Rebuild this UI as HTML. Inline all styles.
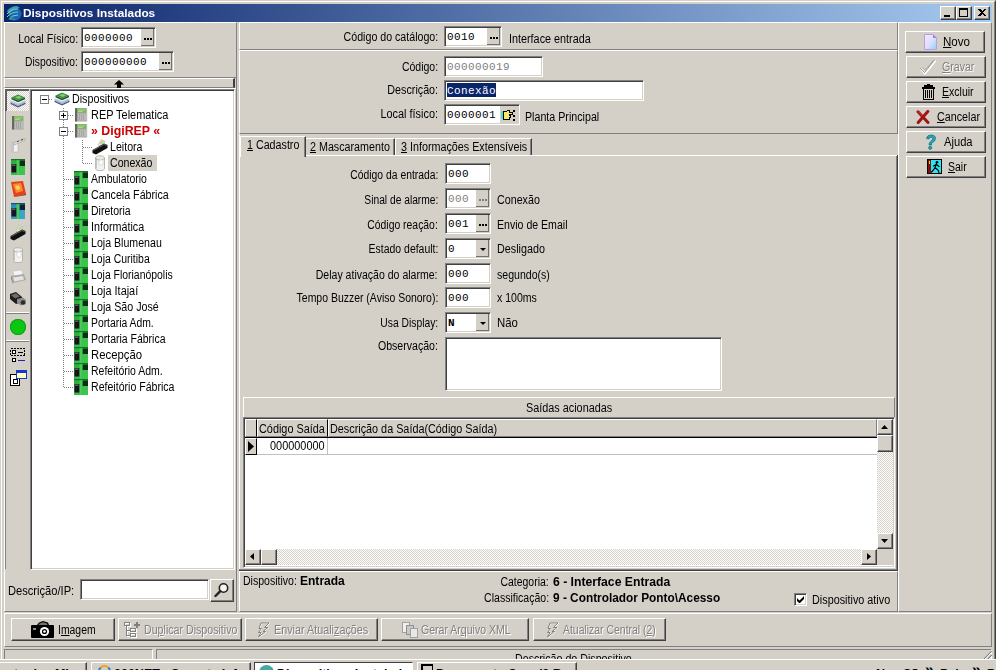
<!DOCTYPE html>
<html lang="pt-BR">
<head>
<meta charset="utf-8">
<title>Dispositivos Instalados</title>
<style>
html,body{margin:0;padding:0;}
body{width:996px;height:670px;overflow:hidden;background:#d4d0c8;position:relative;
 font-family:"Liberation Sans","DejaVu Sans",sans-serif;font-size:12.5px;color:#000;line-height:13px;}
div,span{box-sizing:border-box;}
.a{position:absolute;}
.t{position:absolute;white-space:nowrap;height:13px;line-height:13px;}
.r{text-align:right;}
.b{font-weight:bold;}
u{text-decoration:underline;}
/* raised panel (1px) */
.pr{position:absolute;border:1px solid;border-color:#fff #808080 #808080 #fff;}
/* lowered panel (1px) */
.pl{position:absolute;border:1px solid;border-color:#808080 #fff #fff #808080;}
/* sunken edit (2px) */
.ed{position:absolute;background:#fff;border:1px solid;border-color:#808080 #fff #fff #808080;
 box-shadow:inset 1px 1px 0 #404040, inset -1px -1px 0 #d4d0c8;
 font-family:"Liberation Mono","DejaVu Sans Mono",monospace;font-size:11px;line-height:13px;padding:4px 0 0 2px;white-space:nowrap;overflow:hidden;letter-spacing:0.4px;}
.ed.dis{color:#808080;}
.eb{position:absolute;background:#d4d0c8;border-right:1px solid #707070;border-bottom:1px solid #707070;}
.eb i{position:absolute;top:9px;width:2px;height:2px;background:#000;}
.eb i:nth-child(1){left:3px}.eb i:nth-child(2){left:6px}.eb i:nth-child(3){left:9px}
.eb.g i{background:#808080;}
.sbg{position:absolute;background:#d4d0c8;background-image:linear-gradient(45deg,#fff 25%,transparent 25%,transparent 75%,#fff 75%),linear-gradient(45deg,#fff 25%,transparent 25%,transparent 75%,#fff 75%);background-size:2px 2px;background-position:0 0,1px 1px;}
.cb{position:absolute;width:13px;height:17px;background:#d4d0c8;border-right:1px solid #707070;border-bottom:1px solid #707070;}
.cb:after{content:"";position:absolute;left:3.5px;top:8px;border:3px solid transparent;border-top:3px solid #000;border-bottom:0;}

.dot{position:absolute;background-image:linear-gradient(to right,#808080 50%,transparent 50%);background-size:2px 1px;height:1px;}
.dov{position:absolute;background-image:linear-gradient(to bottom,#808080 50%,transparent 50%);background-size:1px 2px;width:1px;}
.xb{position:absolute;width:9px;height:9px;border:1px solid #808080;background:#fff;}
.xb:before{content:"";position:absolute;left:1px;top:3px;width:5px;height:1px;background:#000;}
.xb.p:after{content:"";position:absolute;left:3px;top:1px;width:1px;height:5px;background:#000;}

/* classic raised button (2px) */
.bt{position:absolute;background:#d4d0c8;border:1px solid;border-color:#fff #404040 #404040 #fff;
 box-shadow:inset -1px -1px 0 #808080, inset 1px 1px 0 #d4d0c8;}
.dis{color:#808080;}
.eb{position:absolute;background:#d4d0c8;border-right:1px solid #707070;border-bottom:1px solid #707070;}
.eb i{position:absolute;top:9px;width:2px;height:2px;background:#000;}
.eb i:nth-child(1){left:3px}.eb i:nth-child(2){left:6px}.eb i:nth-child(3){left:9px}
.eb.g i{background:#808080;}
.sbg{position:absolute;background:#d4d0c8;background-image:linear-gradient(45deg,#fff 25%,transparent 25%,transparent 75%,#fff 75%),linear-gradient(45deg,#fff 25%,transparent 25%,transparent 75%,#fff 75%);background-size:2px 2px;background-position:0 0,1px 1px;}
.cb{position:absolute;width:13px;height:17px;background:#d4d0c8;border-right:1px solid #707070;border-bottom:1px solid #707070;}
.cb:after{content:"";position:absolute;left:3.5px;top:8px;border:3px solid transparent;border-top:3px solid #000;border-bottom:0;}

.dot{position:absolute;background-image:linear-gradient(to right,#808080 50%,transparent 50%);background-size:2px 1px;height:1px;}
.dov{position:absolute;background-image:linear-gradient(to bottom,#808080 50%,transparent 50%);background-size:1px 2px;width:1px;}
.xb{position:absolute;width:9px;height:9px;border:1px solid #808080;background:#fff;}
.xb:before{content:"";position:absolute;left:1px;top:3px;width:5px;height:1px;background:#000;}
.xb.p:after{content:"";position:absolute;left:3px;top:1px;width:1px;height:5px;background:#000;}

.dt{color:#808080;text-shadow:1px 1px 0 #fff;}
</style>
</head>
<body>
<!-- window frame -->
<div class="a" style="left:0;top:0;width:996px;height:661px;border:1px solid;border-color:#d4d0c8 #404040 #404040 #d4d0c8;"></div>
<div class="a" style="left:1px;top:1px;width:994px;height:659px;border:1px solid;border-color:#fff #808080 #808080 #fff;"></div>
<!-- title bar -->
<div class="a" id="title" style="left:4px;top:4px;width:988px;height:18px;background:linear-gradient(to right,#0a246a 0%,#a6caf0 100%);"></div>
<div class="t b" id="ttl" style="transform:scaleX(1.0292);transform-origin:0 50%;margin-left:0px;left:23px;top:5px;color:#fff;font-size:11.5px;line-height:16px;height:16px;">Dispositivos Instalados</div>
<svg class="a" style="left:6px;top:5px" width="16" height="16" viewBox="0 0 16 16"><circle cx="9" cy="9" r="6.5" fill="#1c64b4"/><path d="M1 6 Q5 1 11 1 L14 3 Q7 3 3 9 Z" fill="#3aa0a8"/><path d="M1 9 Q5 4 12 4 M1 12 Q5 7 12 7 M3 14 Q6 10 12 10" stroke="#7cd0d0" stroke-width="1" fill="none"/><path d="M2 14 Q6 16 10 15 L6 12 Z" fill="#2c8c94"/></svg>
<!-- caption buttons -->
<div class="bt" style="left:940px;top:6px;width:16px;height:14px;"></div>
<div class="a" style="left:944px;top:15px;width:6px;height:2px;background:#000;"></div>
<div class="bt" style="left:956px;top:6px;width:16px;height:14px;"></div>
<div class="a" style="left:959px;top:8px;width:9px;height:9px;border:1px solid #000;border-top-width:2px;"></div>
<div class="bt" style="left:974px;top:6px;width:16px;height:14px;"></div>
<svg class="a" style="left:978px;top:9px" width="8" height="7" viewBox="0 0 8 7" shape-rendering="crispEdges"><path d="M0 0 H2 L4 2 L6 0 H8 L5 3.5 L8 7 H6 L4 5 L2 7 H0 L3 3.5 Z" fill="#000"/></svg>
<!-- left top panel -->
<div class="pr" style="left:4px;top:22px;width:233px;height:56px;"></div>
<div class="t r" style="transform:scaleX(0.8550);transform-origin:100% 50%;margin-left:0.6px;right:918px;top:33px;">Local Físico:</div>
<div class="ed" style="left:81px;top:27px;width:75px;height:21px;">0000000</div>
<div class="eb" style="left:141px;top:29px;width:13px;height:17px;"><i></i><i></i><i></i></div>
<div class="t r" style="transform:scaleX(0.8260);transform-origin:100% 50%;margin-left:0.6px;right:918px;top:56px;">Dispositivo:</div>
<div class="ed" style="left:81px;top:51px;width:93px;height:21px;">000000000</div>
<div class="eb" style="left:159px;top:53px;width:13px;height:17px;"><i></i><i></i><i></i></div>
<!-- splitter -->
<div class="pr" style="left:4px;top:78px;width:231px;height:10px;border-color:#fff #404040 #808080 #fff;border-right-width:2px;"></div>
<svg class="a" style="left:114px;top:80px" width="10" height="8" viewBox="0 0 10 8"><path d="M5 0 L10 4.5 H7 V8 H3 V4.5 H0 Z" fill="#000"/></svg>
<div class="a" style="left:236px;top:78px;width:1px;height:493px;background:#808080;"></div>
<!-- icon toolbar -->
<div class="a" style="left:4px;top:88px;width:232px;height:1px;background:#fff;"></div>
<div class="a" style="left:4px;top:88px;width:1px;height:482px;background:#fff;"></div>
<div class="a" style="left:5px;top:89px;width:1px;height:480px;background:#808080;"></div>
<div class="a sbg" style="left:5px;top:89px;width:24px;height:22px;border-top:2px solid #606060;border-left:2px solid #606060;"></div>
<!-- tree -->
<div class="a" style="left:30px;top:89px;width:205px;height:481px;background:#fff;border:1px solid;border-color:#808080 #fff #fff #808080;box-shadow:inset 1px 1px 0 #404040,inset -1px -1px 0 #d4d0c8;"></div>
<div class="dov" style="left:63px;top:108px;height:279px;"></div>
<div class="dov" style="left:82px;top:140px;height:24px;"></div>
<div class="dot" style="left:49px;top:99px;width:4px;"></div>
<svg class="a" style="left:54px;top:91px" width="16" height="16" viewBox="0 0 16 16"><path d="M0.5 9.5 L8 13 L15.5 9.5 V11 L8 14.500 L0.5 11 Z" fill="#4c5a84"/><path d="M0.5 9.5 L8 6.5 L15.5 9.5 L8 13 Z" fill="#8c9cc4"/><path d="M0.5 7 L8 10.5 L15.5 7 V8.800 L8 12.2 L0.5 8.800 Z" fill="#c0c8dc"/><path d="M0.5 7 L8 4 L15.5 7 L8 10.5 Z" fill="#f6f8fc"/><path d="M1.5 4.500 L8 7.500 L15 4.500 V6.200 L8 9.200 L1.5 6.200 Z" fill="#1c5424"/><path d="M1.5 4.500 L8 1.5 L15 4.500 L8 7.500 Z" fill="#3a8c3c"/><path d="M5 4.300 L8.500 2.800 L12 4.300 L8.500 6 Z" fill="#84cc74"/></svg>
<div class="xb " style="left:40px;top:95px;"></div>
<div class="t" style="transform:scaleX(0.8577);transform-origin:0 50%;margin-left:0px;left:72px;top:93px;">Dispositivos</div>
<div class="dot" style="left:64px;top:115px;width:9px;"></div>
<svg class="a" style="left:73px;top:107px" width="16" height="16" viewBox="0 0 16 16"><rect x="2" y="1" width="12" height="13.500" fill="#a4a4a0"/><rect x="2" y="1" width="2" height="13.500" fill="#686866"/><rect x="4" y="1.500" width="9.500" height="4" fill="#78b854"/><path d="M5 3 H12 M5 4.500 H10" stroke="#b8e09c" stroke-width=".8"/><rect x="5" y="6.500" width="8" height="7" fill="#bcbcb8"/><path d="M6.500 7 V13 M8.500 7 V13 M10.500 7 V13" stroke="#9c9c98" stroke-width=".7"/><rect x="13.500" y="1" width=".8" height="13.500" fill="#d4d4d0"/></svg>
<div class="xb p" style="left:59px;top:111px;"></div>
<div class="t" style="transform:scaleX(0.8747);transform-origin:0 50%;margin-left:0px;left:91px;top:109px;">REP Telematica</div>
<div class="dot" style="left:64px;top:131px;width:9px;"></div>
<svg class="a" style="left:73px;top:123px" width="16" height="16" viewBox="0 0 16 16"><rect x="2" y="1" width="12" height="13.500" fill="#a4a4a0"/><rect x="2" y="1" width="2" height="13.500" fill="#686866"/><rect x="4" y="1.500" width="9.500" height="4" fill="#78b854"/><path d="M5 3 H12 M5 4.500 H10" stroke="#b8e09c" stroke-width=".8"/><rect x="5" y="6.500" width="8" height="7" fill="#bcbcb8"/><path d="M6.500 7 V13 M8.500 7 V13 M10.500 7 V13" stroke="#9c9c98" stroke-width=".7"/><rect x="13.500" y="1" width=".8" height="13.500" fill="#d4d4d0"/></svg>
<div class="xb " style="left:59px;top:127px;"></div>
<div class="t b" style="transform:scaleX(0.9895);transform-origin:0 50%;margin-left:0px;left:91px;top:125px;color:#cc0000;">» DigiREP «</div>
<div class="dot" style="left:83px;top:147px;width:9px;"></div>
<svg class="a" style="left:92px;top:139px" width="16" height="16" viewBox="0 0 16 16"><path d="M6 6 L9 0.5 L13 2 L10.500 7.500 Z" fill="#f0f0ec" stroke="#a0a09c" stroke-width=".5"/><path d="M7.500 4.500 L10 1.500 L12 2.500 L10 5.500 Z" fill="#b8d878"/><path d="M0.500 11 L12 4.500 L15.500 6 L15.500 9 L4 15.500 L0.500 14 Z" fill="#101010"/><path d="M1.500 11.300 L12 5.500 L14.500 6.500" stroke="#6c6c6c" stroke-width=".9" fill="none"/></svg>
<div class="t" style="transform:scaleX(0.8500);transform-origin:0 50%;margin-left:0px;left:110px;top:141px;">Leitora</div>
<div class="dot" style="left:83px;top:163px;width:9px;"></div>
<svg class="a" style="left:92px;top:155px" width="16" height="16" viewBox="0 0 16 16"><path d="M3.500 3 Q3.500 0.800 8 0.800 Q12.500 0.800 12.500 3 V13.500 Q12.500 15.600 8 15.600 Q3.500 15.600 3.500 13.500 Z" fill="#f2f2f0" stroke="#a8a8a4" stroke-width=".8"/><path d="M4.300 3 V13.500" stroke="#c4c4c0" stroke-width="1.400"/><rect x="7" y="3" width="4" height="7" rx="1" fill="#fff" stroke="#c8c8c4" stroke-width=".6"/><path d="M3.500 3 Q4 5 8 5 Q12 5 12.500 3" fill="none" stroke="#9c9c98" stroke-width=".6"/></svg>
<div class="a" style="left:108px;top:155px;width:49px;height:16px;background:#d4d0c8;"></div>
<div class="t" style="transform:scaleX(0.8472);transform-origin:0 50%;margin-left:0px;left:110px;top:157px;">Conexão</div>
<div class="dot" style="left:64px;top:179px;width:9px;"></div>
<svg class="a" style="left:73px;top:171px" width="16" height="16" viewBox="0 0 16 16"><rect x="1" y="0" width="14" height="16" fill="#2cb03c"/><rect x="1" y="0" width="14" height="1.200" fill="#187028"/><rect x="6.500" y="1.200" width="3" height="14.800" fill="#48cc58"/><rect x="10" y="7" width="5" height="9" fill="#3cc44c"/><rect x="1" y="13.500" width="6" height="2.500" fill="#38bc48"/><rect x="1.500" y="5" width="4.800" height="8.500" fill="#181420"/><rect x="2" y="5.500" width="3.500" height="1.300" fill="#64746c"/><rect x="9.700" y="1.500" width="5.300" height="5.500" fill="#0c3014"/></svg>
<div class="t" style="transform:scaleX(0.8380);transform-origin:0 50%;margin-left:0px;left:91px;top:173px;">Ambulatorio</div>
<div class="dot" style="left:64px;top:195px;width:9px;"></div>
<svg class="a" style="left:73px;top:187px" width="16" height="16" viewBox="0 0 16 16"><rect x="1" y="0" width="14" height="16" fill="#2cb03c"/><rect x="1" y="0" width="14" height="1.200" fill="#187028"/><rect x="6.500" y="1.200" width="3" height="14.800" fill="#48cc58"/><rect x="10" y="7" width="5" height="9" fill="#3cc44c"/><rect x="1" y="13.500" width="6" height="2.500" fill="#38bc48"/><rect x="1.500" y="5" width="4.800" height="8.500" fill="#181420"/><rect x="2" y="5.500" width="3.500" height="1.300" fill="#64746c"/><rect x="9.700" y="1.500" width="5.300" height="5.500" fill="#0c3014"/></svg>
<div class="t" style="transform:scaleX(0.8537);transform-origin:0 50%;margin-left:0px;left:91px;top:189px;">Cancela Fábrica</div>
<div class="dot" style="left:64px;top:211px;width:9px;"></div>
<svg class="a" style="left:73px;top:203px" width="16" height="16" viewBox="0 0 16 16"><rect x="1" y="0" width="14" height="16" fill="#2cb03c"/><rect x="1" y="0" width="14" height="1.200" fill="#187028"/><rect x="6.500" y="1.200" width="3" height="14.800" fill="#48cc58"/><rect x="10" y="7" width="5" height="9" fill="#3cc44c"/><rect x="1" y="13.500" width="6" height="2.500" fill="#38bc48"/><rect x="1.500" y="5" width="4.800" height="8.500" fill="#181420"/><rect x="2" y="5.500" width="3.500" height="1.300" fill="#64746c"/><rect x="9.700" y="1.500" width="5.300" height="5.500" fill="#0c3014"/></svg>
<div class="t" style="transform:scaleX(0.8402);transform-origin:0 50%;margin-left:0px;left:91px;top:205px;">Diretoria</div>
<div class="dot" style="left:64px;top:227px;width:9px;"></div>
<svg class="a" style="left:73px;top:219px" width="16" height="16" viewBox="0 0 16 16"><rect x="1" y="0" width="14" height="16" fill="#2cb03c"/><rect x="1" y="0" width="14" height="1.200" fill="#187028"/><rect x="6.500" y="1.200" width="3" height="14.800" fill="#48cc58"/><rect x="10" y="7" width="5" height="9" fill="#3cc44c"/><rect x="1" y="13.500" width="6" height="2.500" fill="#38bc48"/><rect x="1.500" y="5" width="4.800" height="8.500" fill="#181420"/><rect x="2" y="5.500" width="3.500" height="1.300" fill="#64746c"/><rect x="9.700" y="1.500" width="5.300" height="5.500" fill="#0c3014"/></svg>
<div class="t" style="transform:scaleX(0.8602);transform-origin:0 50%;margin-left:0px;left:91px;top:221px;">Informática</div>
<div class="dot" style="left:64px;top:243px;width:9px;"></div>
<svg class="a" style="left:73px;top:235px" width="16" height="16" viewBox="0 0 16 16"><rect x="1" y="0" width="14" height="16" fill="#2cb03c"/><rect x="1" y="0" width="14" height="1.200" fill="#187028"/><rect x="6.500" y="1.200" width="3" height="14.800" fill="#48cc58"/><rect x="10" y="7" width="5" height="9" fill="#3cc44c"/><rect x="1" y="13.500" width="6" height="2.500" fill="#38bc48"/><rect x="1.500" y="5" width="4.800" height="8.500" fill="#181420"/><rect x="2" y="5.500" width="3.500" height="1.300" fill="#64746c"/><rect x="9.700" y="1.500" width="5.300" height="5.500" fill="#0c3014"/></svg>
<div class="t" style="transform:scaleX(0.8489);transform-origin:0 50%;margin-left:0px;left:91px;top:237px;">Loja Blumenau</div>
<div class="dot" style="left:64px;top:259px;width:9px;"></div>
<svg class="a" style="left:73px;top:251px" width="16" height="16" viewBox="0 0 16 16"><rect x="1" y="0" width="14" height="16" fill="#2cb03c"/><rect x="1" y="0" width="14" height="1.200" fill="#187028"/><rect x="6.500" y="1.200" width="3" height="14.800" fill="#48cc58"/><rect x="10" y="7" width="5" height="9" fill="#3cc44c"/><rect x="1" y="13.500" width="6" height="2.500" fill="#38bc48"/><rect x="1.500" y="5" width="4.800" height="8.500" fill="#181420"/><rect x="2" y="5.500" width="3.500" height="1.300" fill="#64746c"/><rect x="9.700" y="1.500" width="5.300" height="5.500" fill="#0c3014"/></svg>
<div class="t" style="transform:scaleX(0.8363);transform-origin:0 50%;margin-left:0px;left:91px;top:253px;">Loja Curitiba</div>
<div class="dot" style="left:64px;top:275px;width:9px;"></div>
<svg class="a" style="left:73px;top:267px" width="16" height="16" viewBox="0 0 16 16"><rect x="1" y="0" width="14" height="16" fill="#2cb03c"/><rect x="1" y="0" width="14" height="1.200" fill="#187028"/><rect x="6.500" y="1.200" width="3" height="14.800" fill="#48cc58"/><rect x="10" y="7" width="5" height="9" fill="#3cc44c"/><rect x="1" y="13.500" width="6" height="2.500" fill="#38bc48"/><rect x="1.500" y="5" width="4.800" height="8.500" fill="#181420"/><rect x="2" y="5.500" width="3.500" height="1.300" fill="#64746c"/><rect x="9.700" y="1.500" width="5.300" height="5.500" fill="#0c3014"/></svg>
<div class="t" style="transform:scaleX(0.8338);transform-origin:0 50%;margin-left:0px;left:91px;top:269px;">Loja Florianópolis</div>
<div class="dot" style="left:64px;top:291px;width:9px;"></div>
<svg class="a" style="left:73px;top:283px" width="16" height="16" viewBox="0 0 16 16"><rect x="1" y="0" width="14" height="16" fill="#2cb03c"/><rect x="1" y="0" width="14" height="1.200" fill="#187028"/><rect x="6.500" y="1.200" width="3" height="14.800" fill="#48cc58"/><rect x="10" y="7" width="5" height="9" fill="#3cc44c"/><rect x="1" y="13.500" width="6" height="2.500" fill="#38bc48"/><rect x="1.500" y="5" width="4.800" height="8.500" fill="#181420"/><rect x="2" y="5.500" width="3.500" height="1.300" fill="#64746c"/><rect x="9.700" y="1.500" width="5.300" height="5.500" fill="#0c3014"/></svg>
<div class="t" style="transform:scaleX(0.8705);transform-origin:0 50%;margin-left:0px;left:91px;top:285px;">Loja Itajaí</div>
<div class="dot" style="left:64px;top:307px;width:9px;"></div>
<svg class="a" style="left:73px;top:299px" width="16" height="16" viewBox="0 0 16 16"><rect x="1" y="0" width="14" height="16" fill="#2cb03c"/><rect x="1" y="0" width="14" height="1.200" fill="#187028"/><rect x="6.500" y="1.200" width="3" height="14.800" fill="#48cc58"/><rect x="10" y="7" width="5" height="9" fill="#3cc44c"/><rect x="1" y="13.500" width="6" height="2.500" fill="#38bc48"/><rect x="1.500" y="5" width="4.800" height="8.500" fill="#181420"/><rect x="2" y="5.500" width="3.500" height="1.300" fill="#64746c"/><rect x="9.700" y="1.500" width="5.300" height="5.500" fill="#0c3014"/></svg>
<div class="t" style="transform:scaleX(0.8544);transform-origin:0 50%;margin-left:0px;left:91px;top:301px;">Loja São José</div>
<div class="dot" style="left:64px;top:323px;width:9px;"></div>
<svg class="a" style="left:73px;top:315px" width="16" height="16" viewBox="0 0 16 16"><rect x="1" y="0" width="14" height="16" fill="#2cb03c"/><rect x="1" y="0" width="14" height="1.200" fill="#187028"/><rect x="6.500" y="1.200" width="3" height="14.800" fill="#48cc58"/><rect x="10" y="7" width="5" height="9" fill="#3cc44c"/><rect x="1" y="13.500" width="6" height="2.500" fill="#38bc48"/><rect x="1.500" y="5" width="4.800" height="8.500" fill="#181420"/><rect x="2" y="5.500" width="3.500" height="1.300" fill="#64746c"/><rect x="9.700" y="1.500" width="5.300" height="5.500" fill="#0c3014"/></svg>
<div class="t" style="transform:scaleX(0.8279);transform-origin:0 50%;margin-left:0px;left:91px;top:317px;">Portaria Adm.</div>
<div class="dot" style="left:64px;top:339px;width:9px;"></div>
<svg class="a" style="left:73px;top:331px" width="16" height="16" viewBox="0 0 16 16"><rect x="1" y="0" width="14" height="16" fill="#2cb03c"/><rect x="1" y="0" width="14" height="1.200" fill="#187028"/><rect x="6.500" y="1.200" width="3" height="14.800" fill="#48cc58"/><rect x="10" y="7" width="5" height="9" fill="#3cc44c"/><rect x="1" y="13.500" width="6" height="2.500" fill="#38bc48"/><rect x="1.500" y="5" width="4.800" height="8.500" fill="#181420"/><rect x="2" y="5.500" width="3.500" height="1.300" fill="#64746c"/><rect x="9.700" y="1.500" width="5.300" height="5.500" fill="#0c3014"/></svg>
<div class="t" style="transform:scaleX(0.8377);transform-origin:0 50%;margin-left:0px;left:91px;top:333px;">Portaria Fábrica</div>
<div class="dot" style="left:64px;top:355px;width:9px;"></div>
<svg class="a" style="left:73px;top:347px" width="16" height="16" viewBox="0 0 16 16"><rect x="1" y="0" width="14" height="16" fill="#2cb03c"/><rect x="1" y="0" width="14" height="1.200" fill="#187028"/><rect x="6.500" y="1.200" width="3" height="14.800" fill="#48cc58"/><rect x="10" y="7" width="5" height="9" fill="#3cc44c"/><rect x="1" y="13.500" width="6" height="2.500" fill="#38bc48"/><rect x="1.500" y="5" width="4.800" height="8.500" fill="#181420"/><rect x="2" y="5.500" width="3.500" height="1.300" fill="#64746c"/><rect x="9.700" y="1.500" width="5.300" height="5.500" fill="#0c3014"/></svg>
<div class="t" style="transform:scaleX(0.9059);transform-origin:0 50%;margin-left:0px;left:91px;top:349px;">Recepção</div>
<div class="dot" style="left:64px;top:371px;width:9px;"></div>
<svg class="a" style="left:73px;top:363px" width="16" height="16" viewBox="0 0 16 16"><rect x="1" y="0" width="14" height="16" fill="#2cb03c"/><rect x="1" y="0" width="14" height="1.200" fill="#187028"/><rect x="6.500" y="1.200" width="3" height="14.800" fill="#48cc58"/><rect x="10" y="7" width="5" height="9" fill="#3cc44c"/><rect x="1" y="13.500" width="6" height="2.500" fill="#38bc48"/><rect x="1.500" y="5" width="4.800" height="8.500" fill="#181420"/><rect x="2" y="5.500" width="3.500" height="1.300" fill="#64746c"/><rect x="9.700" y="1.500" width="5.300" height="5.500" fill="#0c3014"/></svg>
<div class="t" style="transform:scaleX(0.8389);transform-origin:0 50%;margin-left:0px;left:91px;top:365px;">Refeitório Adm.</div>
<div class="dot" style="left:64px;top:387px;width:9px;"></div>
<svg class="a" style="left:73px;top:379px" width="16" height="16" viewBox="0 0 16 16"><rect x="1" y="0" width="14" height="16" fill="#2cb03c"/><rect x="1" y="0" width="14" height="1.200" fill="#187028"/><rect x="6.500" y="1.200" width="3" height="14.800" fill="#48cc58"/><rect x="10" y="7" width="5" height="9" fill="#3cc44c"/><rect x="1" y="13.500" width="6" height="2.500" fill="#38bc48"/><rect x="1.500" y="5" width="4.800" height="8.500" fill="#181420"/><rect x="2" y="5.500" width="3.500" height="1.300" fill="#64746c"/><rect x="9.700" y="1.500" width="5.300" height="5.500" fill="#0c3014"/></svg>
<div class="t" style="transform:scaleX(0.8464);transform-origin:0 50%;margin-left:0px;left:91px;top:381px;">Refeitório Fábrica</div>

<svg class="a" style="left:10px;top:93px" width="16" height="16" viewBox="0 0 16 16"><path d="M0.5 9.5 L8 13 L15.5 9.5 V11 L8 14.500 L0.5 11 Z" fill="#4c5a84"/><path d="M0.5 9.5 L8 6.5 L15.5 9.5 L8 13 Z" fill="#8c9cc4"/><path d="M0.5 7 L8 10.5 L15.5 7 V8.800 L8 12.2 L0.5 8.800 Z" fill="#c0c8dc"/><path d="M0.5 7 L8 4 L15.5 7 L8 10.5 Z" fill="#f6f8fc"/><path d="M1.5 4.500 L8 7.500 L15 4.500 V6.200 L8 9.200 L1.5 6.200 Z" fill="#1c5424"/><path d="M1.5 4.500 L8 1.5 L15 4.500 L8 7.500 Z" fill="#3a8c3c"/><path d="M5 4.300 L8.500 2.800 L12 4.300 L8.500 6 Z" fill="#84cc74"/></svg>
<svg class="a" style="left:10px;top:115px" width="16" height="16" viewBox="0 0 16 16"><rect x="2" y="1" width="12" height="13.500" fill="#a4a4a0"/><rect x="2" y="1" width="2" height="13.500" fill="#686866"/><rect x="4" y="1.500" width="9.500" height="4" fill="#78b854"/><path d="M5 3 H12 M5 4.500 H10" stroke="#b8e09c" stroke-width=".8"/><rect x="5" y="6.500" width="8" height="7" fill="#bcbcb8"/><path d="M6.500 7 V13 M8.500 7 V13 M10.500 7 V13" stroke="#9c9c98" stroke-width=".7"/><rect x="13.500" y="1" width=".8" height="13.500" fill="#d4d4d0"/></svg>
<svg class="a" style="left:10px;top:137px" width="16" height="16" viewBox="0 0 16 16"><rect x="2" y="5" width="6" height="10" fill="#f2f2f2" stroke="#b0b0b0" stroke-width=".6"/><rect x="2" y="5" width="2" height="10" fill="#c4c8d0"/><path d="M4 6 L15 1.5 L15 3.5 L4 8 Z" fill="#e8e8e8" stroke="#8c8c8c" stroke-width=".5"/><path d="M7 4.8 L9 4 M11 3.2 L13 2.4" stroke="#555" stroke-width="1.2"/></svg>
<svg class="a" style="left:10px;top:159px" width="16" height="16" viewBox="0 0 16 16"><rect x="1" y="0" width="14" height="16" fill="#2cb03c"/><rect x="1" y="0" width="14" height="1.200" fill="#187028"/><rect x="6.500" y="1.200" width="3" height="14.800" fill="#48cc58"/><rect x="10" y="7" width="5" height="9" fill="#3cc44c"/><rect x="1" y="13.500" width="6" height="2.500" fill="#38bc48"/><rect x="1.500" y="5" width="4.800" height="8.500" fill="#181420"/><rect x="2" y="5.500" width="3.500" height="1.300" fill="#64746c"/><rect x="9.700" y="1.500" width="5.300" height="5.500" fill="#0c3014"/></svg>
<svg class="a" style="left:10px;top:181px" width="16" height="16" viewBox="0 0 16 16"><path d="M1 1 L13 0 L16 13 L4 16 Z" fill="#e8401c"/><path d="M3 3 L11 2 L13 10 L6 12 Z" fill="#f89030"/><path d="M5 5 L9 4.5 L10 8 L7 9 Z" fill="#ffd060"/><path d="M4 16 L16 13 L16 14 L4.5 16 Z" fill="#7a1c08"/></svg>
<svg class="a" style="left:10px;top:203px" width="16" height="16" viewBox="0 0 16 16"><rect x="1" y="0" width="14" height="16" fill="#2a90b4"/><rect x="1" y="0" width="14" height="1.200" fill="#14506c"/><rect x="6.500" y="1.200" width="3" height="14.800" fill="#48cc58"/><rect x="10" y="7" width="5" height="9" fill="#3ca4c8"/><rect x="1" y="13.500" width="6" height="2.500" fill="#389cc0"/><rect x="1.500" y="5" width="4.800" height="8.500" fill="#181420"/><rect x="2" y="5.500" width="3.500" height="1.300" fill="#64746c"/><rect x="9.700" y="1.500" width="5.300" height="5.500" fill="#0c2030"/></svg>
<svg class="a" style="left:10px;top:225px" width="16" height="16" viewBox="0 0 16 16"><path d="M6 6 L9 0.5 L13 2 L10.500 7.500 Z" fill="#f0f0ec" stroke="#a0a09c" stroke-width=".5"/><path d="M7.500 4.500 L10 1.500 L12 2.500 L10 5.500 Z" fill="#b8d878"/><path d="M0.500 11 L12 4.500 L15.500 6 L15.500 9 L4 15.500 L0.500 14 Z" fill="#101010"/><path d="M1.500 11.300 L12 5.500 L14.500 6.500" stroke="#6c6c6c" stroke-width=".9" fill="none"/></svg>
<svg class="a" style="left:10px;top:247px" width="16" height="16" viewBox="0 0 16 16"><path d="M3.500 3 Q3.500 0.800 8 0.800 Q12.500 0.800 12.500 3 V13.500 Q12.500 15.600 8 15.600 Q3.500 15.600 3.500 13.500 Z" fill="#f2f2f0" stroke="#a8a8a4" stroke-width=".8"/><path d="M4.300 3 V13.500" stroke="#c4c4c0" stroke-width="1.400"/><rect x="7" y="3" width="4" height="7" rx="1" fill="#fff" stroke="#c8c8c4" stroke-width=".6"/><path d="M3.500 3 Q4 5 8 5 Q12 5 12.500 3" fill="none" stroke="#9c9c98" stroke-width=".6"/></svg>
<svg class="a" style="left:10px;top:269px" width="16" height="16" viewBox="0 0 16 16"><path d="M3 2 L12 1 L13 6 L4 7 Z" fill="#f4f4f4" stroke="#b8b8b8" stroke-width=".5"/><path d="M1 7 L14 5 L16 11 L3 14 Z" fill="#a8a8a8"/><path d="M3 8.5 L13 7 L14 10.5 L4.5 12.5 Z" fill="#e4e4e4"/><path d="M1 7 L3 14 L3 15 L1 9 Z" fill="#5c5c5c"/></svg>
<svg class="a" style="left:10px;top:291px" width="16" height="16" viewBox="0 0 16 16"><path d="M0 3 L6 1 L12 6 L12 11 L6 13 L0 8 Z" fill="#1c1c1c"/><path d="M1 4 L6 2.2 L10 5.5 L5 7.5 Z" fill="#6c6c6c"/><path d="M7 8 L13 6.5 L16 9 L16 13 L11 14.5 L7 12 Z" fill="#8c8c8c"/><circle cx="13" cy="11.5" r="2.3" fill="#2c2c2c"/></svg>
<div class="a" style="left:6px;top:312px;width:23px;height:2px;border-top:1px solid #fff;border-bottom:1px solid #808080;"></div>
<div class="a" style="left:10px;top:319px;width:16px;height:16px;border-radius:8px;background:#08c812;box-shadow:inset 0 0 0 1px #10a018;"></div>
<div class="a" style="left:6px;top:340px;width:23px;height:2px;border-top:1px solid #fff;border-bottom:1px solid #808080;"></div>
<svg class="a" style="left:10px;top:348px" width="16" height="16" viewBox="0 0 16 16" shape-rendering="crispEdges"><rect x=".5" y=".5" width="14" height="7" fill="none" stroke="#000" stroke-dasharray="2 1"/><rect x="2.5" y="2.5" width="3" height="3" fill="#fff" stroke="#000"/><path d="M8 4.5 H13" stroke="#000"/><rect x="2.5" y="10.5" width="3" height="3" fill="#fff" stroke="#000"/><path d="M8 12.5 H15" stroke="#2020c0"/></svg>
<svg class="a" style="left:10px;top:370px" width="17" height="16" viewBox="0 0 17 16" shape-rendering="crispEdges"><rect x=".5" y="4.5" width="9" height="11" fill="#fff" stroke="#000"/><rect x="3.5" y="9.5" width="4" height="4" fill="#fff" stroke="#000"/><rect x="6.5" y=".5" width="10" height="8" fill="#ffffc0" stroke="#1838c8"/><rect x="7" y="1" width="9" height="2" fill="#1838c8"/></svg>

<!-- search row -->
<div class="t" style="transform:scaleX(0.8905);transform-origin:0 50%;margin-left:0px;left:8px;top:585px;">Descrição/IP:</div>
<div class="ed" style="left:80px;top:579px;width:129px;height:21px;"></div>
<div class="bt" style="left:210px;top:579px;width:24px;height:23px;"></div>
<svg class="a" style="left:214px;top:582px" width="16" height="16" viewBox="0 0 16 16"><circle cx="9.5" cy="6" r="4.2" fill="#f4f4f0" stroke="#222" stroke-width="1.6"/><path d="M6.3 9.2 L1.5 14" stroke="#222" stroke-width="2.4" stroke-linecap="round"/></svg>

<!-- right: catalog panel -->
<div class="pr" style="left:239px;top:22px;width:659px;height:28px;"></div>
<div class="t r" style="transform:scaleX(0.8507);transform-origin:100% 50%;margin-left:0.6px;right:558px;top:31px;">Código do catálogo:</div>
<div class="ed" style="left:444px;top:26px;width:58px;height:21px;">0010</div>
<div class="eb" style="left:487px;top:28px;width:13px;height:17px;"><i></i><i></i><i></i></div>
<div class="t" style="transform:scaleX(0.8644);transform-origin:0 50%;margin-left:0px;left:509px;top:33px;">Interface entrada</div>
<!-- right: main fields panel -->
<div class="pr" style="left:239px;top:50px;width:659px;height:84px;"></div>
<div class="t r" style="transform:scaleX(0.8400);transform-origin:100% 50%;margin-left:0.6px;right:558px;top:61px;">Código:</div>
<div class="ed dis" style="left:444px;top:56px;width:99px;height:21px;">000000019</div>
<div class="t r" style="transform:scaleX(0.8586);transform-origin:100% 50%;margin-left:0.6px;right:558px;top:84px;">Descrição:</div>
<div class="ed" style="left:444px;top:80px;width:200px;height:21px;"></div>
<div class="a" style="left:447px;top:83px;width:49px;height:14px;background:#0a246a;"></div>
<div class="ed" style="left:444px;top:80px;width:199px;height:21px;background:none;border-color:transparent;box-shadow:none;color:#fff;">Conexão</div>
<div class="t r" style="transform:scaleX(0.8725);transform-origin:100% 50%;margin-left:0.6px;right:558px;top:108px;">Local físico:</div>
<div class="ed" style="left:444px;top:104px;width:76px;height:21px;">0000001</div>
<div class="eb" style="left:500px;top:106px;width:18px;height:17px;border:0;"></div>
<svg class="a" style="left:501px;top:110px" width="15" height="11" viewBox="0 0 15 11" shape-rendering="crispEdges"><rect x="0" y="1" width="2" height="8" fill="#40e0d0"/><path d="M2.500 1.500 H5.500 L6.500 0.500 H8.500 V2.500 H11.500 V4.500 H8.500 V5.500 H9.500 V7.500 H8.500 V9.500 H2.500 Z" fill="#f8e868" stroke="#000" stroke-width="1"/><rect x="12" y="0" width="2" height="2" fill="#000"/><rect x="12" y="5" width="2" height="2" fill="#000"/><rect x="12" y="9" width="2" height="2" fill="#000"/></svg>
<div class="t" style="transform:scaleX(0.8543);transform-origin:0 50%;margin-left:0px;left:525px;top:111px;">Planta Principal</div>
<!-- tabs area -->
<div class="a" style="left:239px;top:134px;width:1px;height:436px;background:#fff;"></div>
<div class="a" style="left:239px;top:155px;width:659px;height:416px;border-right:1px solid #404040;border-bottom:1px solid #404040;box-shadow:inset -1px -1px 0 #808080;"></div>
<!-- page body border -->
<div class="a" style="left:240px;top:155px;width:657px;height:1px;background:#fff;"></div>
<!-- tab 2 -->
<div class="a" style="left:306px;top:138px;width:89px;height:17px;border-top:1px solid #fff;border-right:1px solid #404040;box-shadow:inset -1px 0 0 #808080;"></div>
<div class="t" style="transform:scaleX(0.8581);transform-origin:0 50%;margin-left:0px;left:310px;top:141px;"><u>2</u> Mascaramento</div>
<!-- tab 3 -->
<div class="a" style="left:395px;top:138px;width:137px;height:17px;border-top:1px solid #fff;border-left:1px solid #fff;border-right:1px solid #404040;box-shadow:inset -1px 0 0 #808080;"></div>
<div class="t" style="transform:scaleX(0.8608);transform-origin:0 50%;margin-left:0px;left:401px;top:141px;"><u>3</u> Informações Extensíveis</div>
<!-- tab 1 selected -->
<div class="a" style="left:240px;top:136px;width:66px;height:21px;background:#d4d0c8;border-top:1px solid #fff;border-left:1px solid #fff;border-right:1px solid #404040;box-shadow:inset -1px 0 0 #808080;"></div>
<div class="t" style="transform:scaleX(0.8568);transform-origin:0 50%;margin-left:0px;left:247px;top:139px;"><u>1</u> Cadastro</div>
<!-- fields -->
<div class="t r" style="transform:scaleX(0.8275);transform-origin:100% 50%;margin-left:0.6px;right:558px;top:169px;">Código da entrada:</div>
<div class="ed" style="left:445px;top:163px;width:46px;height:21px;">000</div>
<div class="t r" style="transform:scaleX(0.8192);transform-origin:100% 50%;margin-left:0.6px;right:558px;top:194px;">Sinal de alarme:</div>
<div class="ed dis" style="left:445px;top:188px;width:46px;height:21px;">000</div>
<div class="eb g" style="left:476px;top:190px;width:13px;height:17px;"><i></i><i></i><i></i></div>
<div class="t" style="transform:scaleX(0.8572);transform-origin:0 50%;margin-left:0px;left:497px;top:194px;">Conexão</div>
<div class="t r" style="transform:scaleX(0.8316);transform-origin:100% 50%;margin-left:0.6px;right:558px;top:219px;">Código reação:</div>
<div class="ed" style="left:445px;top:213px;width:46px;height:21px;">001</div>
<div class="eb" style="left:476px;top:215px;width:13px;height:17px;"><i></i><i></i><i></i></div>
<div class="t" style="transform:scaleX(0.8456);transform-origin:0 50%;margin-left:0px;left:497px;top:219px;">Envio de Email</div>
<div class="t r" style="transform:scaleX(0.8369);transform-origin:100% 50%;margin-left:0.6px;right:558px;top:243px;">Estado default:</div>
<div class="ed" style="left:445px;top:238px;width:46px;height:21px;">0</div>
<div class="cb" style="left:476px;top:240px;"></div>
<div class="t" style="transform:scaleX(0.8616);transform-origin:0 50%;margin-left:0px;left:497px;top:243px;">Desligado</div>
<div class="t r" style="transform:scaleX(0.8427);transform-origin:100% 50%;margin-left:0.6px;right:558px;top:269px;">Delay ativação do alarme:</div>
<div class="ed" style="left:445px;top:263px;width:46px;height:21px;">000</div>
<div class="t" style="transform:scaleX(0.8458);transform-origin:0 50%;margin-left:0px;left:497px;top:269px;">segundo(s)</div>
<div class="t r" style="transform:scaleX(0.8370);transform-origin:100% 50%;margin-left:0.6px;right:558px;top:292px;">Tempo Buzzer (Aviso Sonoro):</div>
<div class="ed" style="left:445px;top:287px;width:46px;height:21px;">000</div>
<div class="t" style="transform:scaleX(0.8444);transform-origin:0 50%;margin-left:0px;left:497px;top:292px;">x 100ms</div>
<div class="t r" style="transform:scaleX(0.8237);transform-origin:100% 50%;margin-left:0.6px;right:558px;top:317px;">Usa Display:</div>
<div class="ed b" style="left:445px;top:312px;width:46px;height:21px;">N</div>
<div class="cb" style="left:476px;top:314px;"></div>
<div class="t" style="transform:scaleX(0.9112);transform-origin:0 50%;margin-left:0px;left:497px;top:317px;">Não</div>
<div class="t r" style="transform:scaleX(0.8451);transform-origin:100% 50%;margin-left:0.6px;right:558px;top:340px;">Observação:</div>
<div class="ed" style="left:445px;top:337px;width:277px;height:54px;"></div>

<!-- Saídas acionadas header -->
<div class="pr" style="left:243px;top:397px;width:652px;height:21px;"></div>
<div class="t" style="transform:scaleX(0.8673);transform-origin:0 50%;margin-left:0px;left:526px;top:402px;">Saídas acionadas</div>
<!-- grid -->
<div class="a" style="left:243px;top:417px;width:652px;height:151px;background:#fff;border:1px solid;border-color:#808080 #fff #fff #808080;box-shadow:inset 1px 1px 0 #404040,inset -1px -1px 0 #d4d0c8;"></div>
<!-- header cells -->
<div class="a" style="left:245px;top:419px;width:632px;height:19px;background:#d4d0c8;border-bottom:1px solid #000;"></div>
<div class="a" style="left:245px;top:419px;width:12px;height:18px;background:#d4d0c8;border:1px solid;border-color:#fff #808080 #808080 #fff;border-right-color:#000;"></div>
<div class="a" style="left:257px;top:419px;width:71px;height:18px;background:#d4d0c8;border:1px solid;border-color:#fff #000 #808080 #fff;"></div>
<div class="a" style="left:328px;top:419px;width:549px;height:18px;background:#d4d0c8;border:1px solid;border-color:#fff #808080 #808080 #fff;"></div>
<div class="t" style="transform:scaleX(0.8698);transform-origin:0 50%;margin-left:0px;left:259px;top:423px;">Código Saída</div>
<div class="t" style="transform:scaleX(0.8656);transform-origin:0 50%;margin-left:0px;left:330px;top:423px;">Descrição da Saída(Código Saída)</div>
<!-- row -->
<div class="a" style="left:245px;top:438px;width:12px;height:17px;background:#d4d0c8;border:1px solid;border-color:#fff #000 #000 #fff;"></div>
<svg class="a" style="left:248px;top:441px" width="6" height="11" viewBox="0 0 6 11"><path d="M0 0 L6 5.5 L0 11 Z" fill="#000"/></svg>
<div class="a" style="left:257px;top:454px;width:620px;height:1px;background:#c0c0c0;"></div>
<div class="a" style="left:327px;top:438px;width:1px;height:17px;background:#c0c0c0;"></div>
<div class="t" style="transform:scaleX(0.8725);transform-origin:0 50%;margin-left:0px;left:270px;top:440px;">000000000</div>
<!-- v scrollbar -->
<div class="sbg" style="left:877px;top:419px;width:16px;height:130px;"></div>
<div class="bt" style="left:877px;top:419px;width:16px;height:16px;"></div>
<svg class="a" style="left:881px;top:425px" width="7" height="4" viewBox="0 0 7 4"><path d="M0 4 L3.5 0 L7 4 Z" fill="#000"/></svg>
<div class="bt" style="left:877px;top:435px;width:16px;height:17px;"></div>
<div class="bt" style="left:877px;top:533px;width:16px;height:16px;"></div>
<svg class="a" style="left:881px;top:539px" width="7" height="4" viewBox="0 0 7 4"><path d="M0 0 L3.5 4 L7 0 Z" fill="#000"/></svg>
<!-- h scrollbar -->
<div class="sbg" style="left:245px;top:549px;width:632px;height:16px;"></div>
<div class="bt" style="left:245px;top:549px;width:16px;height:16px;"></div>
<svg class="a" style="left:250px;top:553px" width="4" height="7" viewBox="0 0 4 7"><path d="M4 0 L0 3.5 L4 7 Z" fill="#000"/></svg>
<div class="bt" style="left:261px;top:549px;width:16px;height:16px;"></div>
<div class="bt" style="left:861px;top:549px;width:16px;height:16px;"></div>
<svg class="a" style="left:867px;top:553px" width="4" height="7" viewBox="0 0 4 7"><path d="M0 0 L4 3.5 L0 7 Z" fill="#000"/></svg>
<div class="a" style="left:877px;top:549px;width:16px;height:16px;background:#d4d0c8;"></div>


<!-- right button column -->
<div class="pr" style="left:898px;top:22px;width:94px;height:590px;border-right-color:#808080;"></div>
<div class="bt" style="left:905px;top:31px;width:80px;height:22px;"></div>
<svg class="a" style="left:924px;top:34px" width="13" height="16" viewBox="0 0 13 16"><defs><linearGradient id="gn" x1="0" y1="0" x2="1" y2="1"><stop offset="0" stop-color="#f4e8ff"/><stop offset=".5" stop-color="#e0e0ff"/><stop offset="1" stop-color="#90d0f4"/></linearGradient></defs><path d="M.5 .5 H9 L12.5 4 V15.5 H.5 Z" fill="url(#gn)" stroke="#b8a0e0" stroke-width="1"/><path d="M9 .5 V4 H12.5 Z" fill="#a080d8"/></svg>
<div class="t" style="transform:scaleX(0.9251);transform-origin:0 50%;margin-left:0px;left:942.5px;top:36px;"><u>N</u>ovo</div>
<div class="bt" style="left:906px;top:56px;width:80px;height:22px;"></div>
<svg class="a" style="left:919px;top:59px" width="18" height="16" viewBox="0 0 18 16"><path d="M2 10 L6 14.5 L16.5 1.5" stroke="#fff" stroke-width="2.2" fill="none"/><path d="M1.3 9.3 L5.5 13.6 L15.5 1" stroke="#909090" stroke-width="1" fill="none"/><path d="M3 8 L6 11 L15 .5" stroke="#a8a8a8" stroke-width=".8" fill="none"/></svg>
<div class="t dt" style="transform:scaleX(0.8478);transform-origin:0 50%;margin-left:0px;left:942px;top:61px;"><u>G</u>ravar</div>
<div class="bt" style="left:906px;top:81px;width:80px;height:22px;"></div>
<svg class="a" style="left:922px;top:84px" width="13" height="16" viewBox="0 0 13 16" shape-rendering="crispEdges"><path d="M5 0 H8 V1 H5 Z M2 1 H11 V3 H2 Z M0 3 H13 V5 H0 Z" fill="#000"/><path d="M1.5 5 V15.5 H11.5 V5" fill="#d4d0c8" stroke="#000" stroke-width="1"/><path d="M3.5 6 V14 M5.5 6 V14 M7.5 6 V14 M9.5 6 V14" stroke="#000" stroke-width="1"/></svg>
<div class="t" style="transform:scaleX(0.8423);transform-origin:0 50%;margin-left:0px;left:942px;top:86px;"><u>E</u>xcluir</div>
<div class="bt" style="left:906px;top:106px;width:80px;height:22px;"></div>
<svg class="a" style="left:916px;top:110px" width="14" height="14" viewBox="0 0 14 14"><path d="M2 1.800 L12 12.500 M11.800 1.500 L2.200 12.500" stroke="#a01414" stroke-width="3" stroke-linecap="round" fill="none"/><path d="M2.200 1.600 L6.500 6.200" stroke="#d04848" stroke-width=".9" fill="none"/></svg>
<div class="t" style="transform:scaleX(0.8595);transform-origin:0 50%;margin-left:0px;left:936.5px;top:111px;"><u>C</u>ancelar</div>
<div class="bt" style="left:906px;top:131px;width:80px;height:22px;"></div>
<svg class="a" style="left:925px;top:134px" width="12" height="16" viewBox="0 0 12 16"><path d="M1.5 4.5 Q2 1 6 1 Q10.5 1 10.5 4.5 Q10.5 7 7.5 8.5 Q6.5 9.2 6.5 11 H4 Q4 8.5 5.5 7.5 Q7.8 6 7.8 4.5 Q7.8 3.2 6 3.2 Q4.2 3.2 4 5 Z" fill="#20a8b8" stroke="#0c6c7c" stroke-width=".7"/><circle cx="5.2" cy="13.8" r="1.6" fill="#20a8b8" stroke="#0c6c7c" stroke-width=".7"/></svg>
<div class="t" style="transform:scaleX(0.8942);transform-origin:0 50%;margin-left:0px;left:944px;top:136px;">Ajuda</div>
<div class="bt" style="left:906px;top:156px;width:80px;height:22px;"></div>
<svg class="a" style="left:927px;top:159px" width="15" height="15" viewBox="0 0 15 15"><rect x=".5" y=".5" width="14" height="14" fill="#28e4f4" stroke="#000"/><rect x="1" y="1" width="3" height="13" fill="#801010"/><rect x="2" y="2" width="1" height="3" fill="#f0d020"/><circle cx="10" cy="3.300" r="1.300" fill="#000"/><path d="M9.500 4.500 L8 8.500 L11 11 L12 13.500 M8 8.500 L6.500 11 L4.500 13 M9.300 5.500 L6.500 7 M9.500 5.500 L12 7.500" stroke="#000" stroke-width="1.200" fill="none" stroke-linecap="round"/></svg>
<div class="t" style="transform:scaleX(0.8404);transform-origin:0 50%;margin-left:0px;left:947.5px;top:161px;"><u>S</u>air</div>

<!-- info panel under right area -->
<div class="pr" style="left:239px;top:571px;width:659px;height:41px;"></div>
<div class="t" style="transform:scaleX(0.8432);transform-origin:0 50%;margin-left:0px;left:243px;top:575px;">Dispositivo:</div>
<div class="t b" style="transform:scaleX(0.9625);transform-origin:0 50%;margin-left:0px;left:300px;top:575px;">Entrada</div>
<div class="t r" style="transform:scaleX(0.8355);transform-origin:100% 50%;margin-left:0.6px;right:447px;top:576px;">Categoria:</div>
<div class="t b" style="transform:scaleX(0.9751);transform-origin:0 50%;margin-left:0px;left:553px;top:576px;">6 - Interface Entrada</div>
<div class="t r" style="transform:scaleX(0.8428);transform-origin:100% 50%;margin-left:0.6px;right:447px;top:592px;">Classificação:</div>
<div class="t b" style="transform:scaleX(0.9478);transform-origin:0 50%;margin-left:0px;left:553px;top:592px;">9 - Controlador Ponto\Acesso</div>
<!-- checkbox -->
<div class="a" style="left:794px;top:593px;width:13px;height:13px;background:#fff;border:1px solid;border-color:#808080 #fff #fff #808080;box-shadow:inset 1px 1px 0 #404040,inset -1px -1px 0 #d4d0c8;"></div>
<svg class="a" style="left:797px;top:596px" width="7" height="7" viewBox="0 0 7 7"><path d="M0 2 L2.5 4.5 L7 0 V3 L2.5 7.500 L0 5 Z" fill="#000"/></svg>
<div class="t" style="transform:scaleX(0.8657);transform-origin:0 50%;margin-left:0px;left:812px;top:594px;">Dispositivo ativo</div>
<!-- left panel bottom & bar -->
<div class="pr" style="left:4px;top:570px;width:233px;height:42px;border-top-color:transparent;"></div>
<div class="pr" style="left:4px;top:613px;width:988px;height:34px;"></div>
<div class="bt" style="left:11px;top:618px;width:104px;height:23px;"></div>
<svg class="a" style="left:31px;top:621px" width="23" height="17" viewBox="0 0 23 17"><path d="M1 4 H6 L8 1.5 L12 0 L17 1.5 L18 4 H22 Q23 4 23 5 V16 Q23 17 22 17 H1 Q0 17 0 16 V5 Q0 4 1 4 Z" fill="#000"/><path d="M8.5 2.5 L12 1.2 L16 2.5 L16.5 4 H7.5 Z" fill="#d4d0c8" opacity=".55"/><circle cx="13.5" cy="10.5" r="4.6" fill="#fff"/><circle cx="13.5" cy="10.5" r="2.6" fill="#000"/><circle cx="13.5" cy="10.5" r="1.3" fill="#fff"/><rect x="2" y="7" width="3" height="2" fill="#888"/></svg>
<div class="t" style="transform:scaleX(0.8321);transform-origin:0 50%;margin-left:0px;left:58px;top:624px;">I<u>m</u>agem</div>
<div class="bt" style="left:118px;top:618px;width:124px;height:23px;"></div>
<svg class="a" style="left:124px;top:622px" width="17" height="16" viewBox="0 0 17 16" shape-rendering="crispEdges"><g transform="translate(1,1)" stroke="#fff" fill="none"><path d="M2.5 4 V13.5 H6 M2.5 8.5 H6"/><rect x=".5" y=".5" width="5" height="3"/><rect x="6.5" y="6.5" width="5" height="3"/><rect x="6.5" y="11.5" width="5" height="3"/></g><g stroke="#808080" fill="none"><path d="M2.5 4 V13.5 H6 M2.5 8.5 H6"/><rect x=".5" y=".5" width="5" height="3"/><rect x="6.5" y="6.5" width="5" height="3"/><rect x="6.5" y="11.5" width="5" height="3"/><path d="M10 3 H16 M13 0 V6" stroke-width="2"/></g></svg>
<div class="t dt" style="transform:scaleX(0.8508);transform-origin:0 50%;margin-left:0px;left:143.5px;top:624px;">Du<u>p</u>licar Dispositivo</div>
<div class="bt" style="left:245px;top:618px;width:133px;height:23px;"></div>
<svg class="a" style="left:257px;top:622px" width="13" height="16" viewBox="0 0 13 16"><path d="M4.5 1.5 H12.5 L8 6 H11.5 L6.5 10 H9 L2 15.5 L4.5 11 H2 L5 7 H2.5 Z" fill="#d4d0c8" stroke="#fff" stroke-width="1"/><path d="M4 1 H12 L7.5 5.5 H11 L6 9.5 H8.5 L1.5 15 L4 10.5 H1.5 L4.5 6.5 H2 Z" fill="none" stroke="#808080" stroke-width="1"/></svg>
<div class="t dt" style="transform:scaleX(0.8635);transform-origin:0 50%;margin-left:0px;left:273.5px;top:624px;">Enviar Atuali<u>z</u>ações</div>
<div class="bt" style="left:381px;top:618px;width:148px;height:23px;"></div>
<svg class="a" style="left:401px;top:622px" width="17" height="16" viewBox="0 0 17 16"><rect x="1.5" y=".5" width="7" height="10" fill="#f0f0f0" stroke="#a0a0a0"/><rect x="5.5" y="3.5" width="7" height="9" fill="#c8c8c8" stroke="#909090"/><rect x="9.500" y="6.5" width="7" height="9" fill="#e8e8e8" stroke="#a0a0a0"/></svg>
<div class="t dt" style="transform:scaleX(0.8437);transform-origin:0 50%;margin-left:0px;left:420.5px;top:624px;">Gerar Ar<u>q</u>uivo XML</div>
<div class="bt" style="left:533px;top:618px;width:133px;height:23px;"></div>
<svg class="a" style="left:546px;top:622px" width="13" height="16" viewBox="0 0 13 16"><path d="M4.5 1.5 H12.5 L8 6 H11.5 L6.5 10 H9 L2 15.5 L4.5 11 H2 L5 7 H2.5 Z" fill="#d4d0c8" stroke="#fff" stroke-width="1"/><path d="M4 1 H12 L7.5 5.5 H11 L6 9.5 H8.5 L1.5 15 L4 10.5 H1.5 L4.5 6.5 H2 Z" fill="none" stroke="#808080" stroke-width="1"/></svg>
<div class="t dt" style="transform:scaleX(0.8347);transform-origin:0 50%;margin-left:0px;left:562.5px;top:624px;">Atualizar Central (<u>2</u>)</div>
<!-- status bar -->
<div class="pl" style="left:4px;top:649px;width:149px;height:12px;"></div>
<div class="pl" style="left:156px;top:649px;width:836px;height:12px;"></div>
<div class="t" style="transform:scaleX(0.8534);transform-origin:0 50%;margin-left:0px;left:515px;top:653px;">Descrição do Dispositivo</div>
<svg class="a" style="left:984px;top:651px" width="8" height="8" viewBox="0 0 8 8"><path d="M8 0 L0 8 M8 4 L4 8" stroke="#808080" stroke-width="1.2"/><path d="M8 1.200 L1.200 8 M8 5.200 L5.200 8" stroke="#fff" stroke-width="1"/></svg>
<!-- taskbar -->
<div class="a" id="task" style="left:0;top:659px;width:996px;height:11px;background:#d4d0c8;border-top:1px solid #fff;overflow:hidden;">
<div class="bt" style="left:-60px;top:2px;width:147px;height:22px;"></div>
<div class="t b" style="left:7px;top:8px;">ctools - Micros...</div>
<div class="bt" style="left:91px;top:2px;width:160px;height:22px;"></div>
<div class="a" style="left:98px;top:5px;width:13px;height:13px;border-radius:7px;border:2.5px solid #2a78d0;border-top-color:#f0a020;"></div>
<div class="t b" style="left:114px;top:8px;">000NET - Suporte Inf...</div>
<div class="a sbg" style="left:254px;top:2px;width:159px;height:22px;border:1px solid;border-color:#404040 #fff #fff #404040;background-color:#fff;"></div>
<div class="a" style="left:259px;top:5px;width:15px;height:15px;border-radius:8px;background:#48a8a0;"></div>
<div class="t b" style="left:277px;top:8px;">Dispositivos Instalados</div>
<div class="bt" style="left:417px;top:2px;width:160px;height:22px;"></div>
<div class="a" style="left:421px;top:4px;width:12px;height:14px;border:1px solid #000;border-width:2px 1px 1px 2px;"></div>
<div class="t b" style="left:436px;top:8px;">Documento Sem (2 B...</div>
<div class="t b" style="left:876px;top:8px;">Neo São</div>
<div class="t b" style="left:925px;top:3px;font-size:16px;">»</div>
<div class="t b" style="left:940px;top:8px;">Palm</div>
<div class="t b" style="left:972px;top:3px;font-size:16px;">»</div>
<div class="t b" style="left:987px;top:8px;">Pc</div>
</div>

</body>
</html>
